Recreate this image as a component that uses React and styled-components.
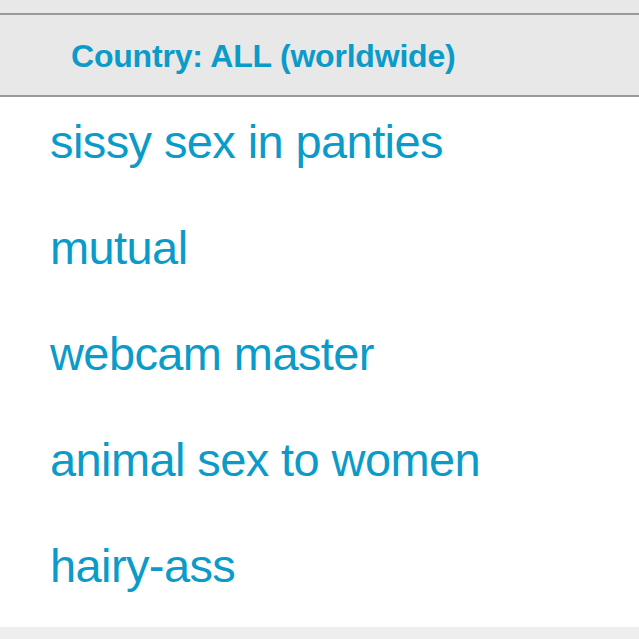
import React from 'react';
import styled, { createGlobalStyle } from 'styled-components';

const GlobalStyle = createGlobalStyle`
  html, body {
    margin: 0;
    padding: 0;
    background: #eeeeee;
    font-family: "Liberation Sans", Arial, Helvetica, sans-serif;
  }
`;

const Page = styled.div`
  width: 639px;
  height: 639px;
  display: flex;
  flex-direction: column;
  background: #eeeeee;
  overflow: hidden;
`;

const TopStrip = styled.div`
  height: 13px;
  background: #e8e8e8;
`;

const Header = styled.div`
  height: 80px;
  box-sizing: content-box;
  background: #e8e8e8;
  border-top: 2px solid #9a9a9a;
  border-bottom: 2px solid #9a9a9a;
  padding: 0 0 0 71px;
  display: flex;
  align-items: flex-start;

  h2 {
    margin: 25px 0 0;
    font-size: 32px;
    line-height: 32px;
    font-weight: bold;
    letter-spacing: -0.2px;
    color: #0a9bc8;
  }
`;

const List = styled.ul`
  list-style: none;
  margin: 0;
  padding: 0;
  background: #fff;
`;

const Item = styled.li`
  height: 106px;
  box-sizing: border-box;
  padding: 21px 0 0 50px;
  font-size: 47px;
  line-height: 47px;
  letter-spacing: -0.6px;
  color: #0a9bc8;
  white-space: nowrap;
`;

const terms = [
  'sissy sex in panties',
  'mutual',
  'webcam master',
  'animal sex to women',
  'hairy-ass',
];

const App = () => {
  return (
    <Page>
      <GlobalStyle />
      <TopStrip />
      <Header>
        <h2>Country: ALL (worldwide)</h2>
      </Header>
      <List>
        {terms.map((term) => (
          <Item key={term}>{term}</Item>
        ))}
      </List>
    </Page>
  );
};

export default App;
